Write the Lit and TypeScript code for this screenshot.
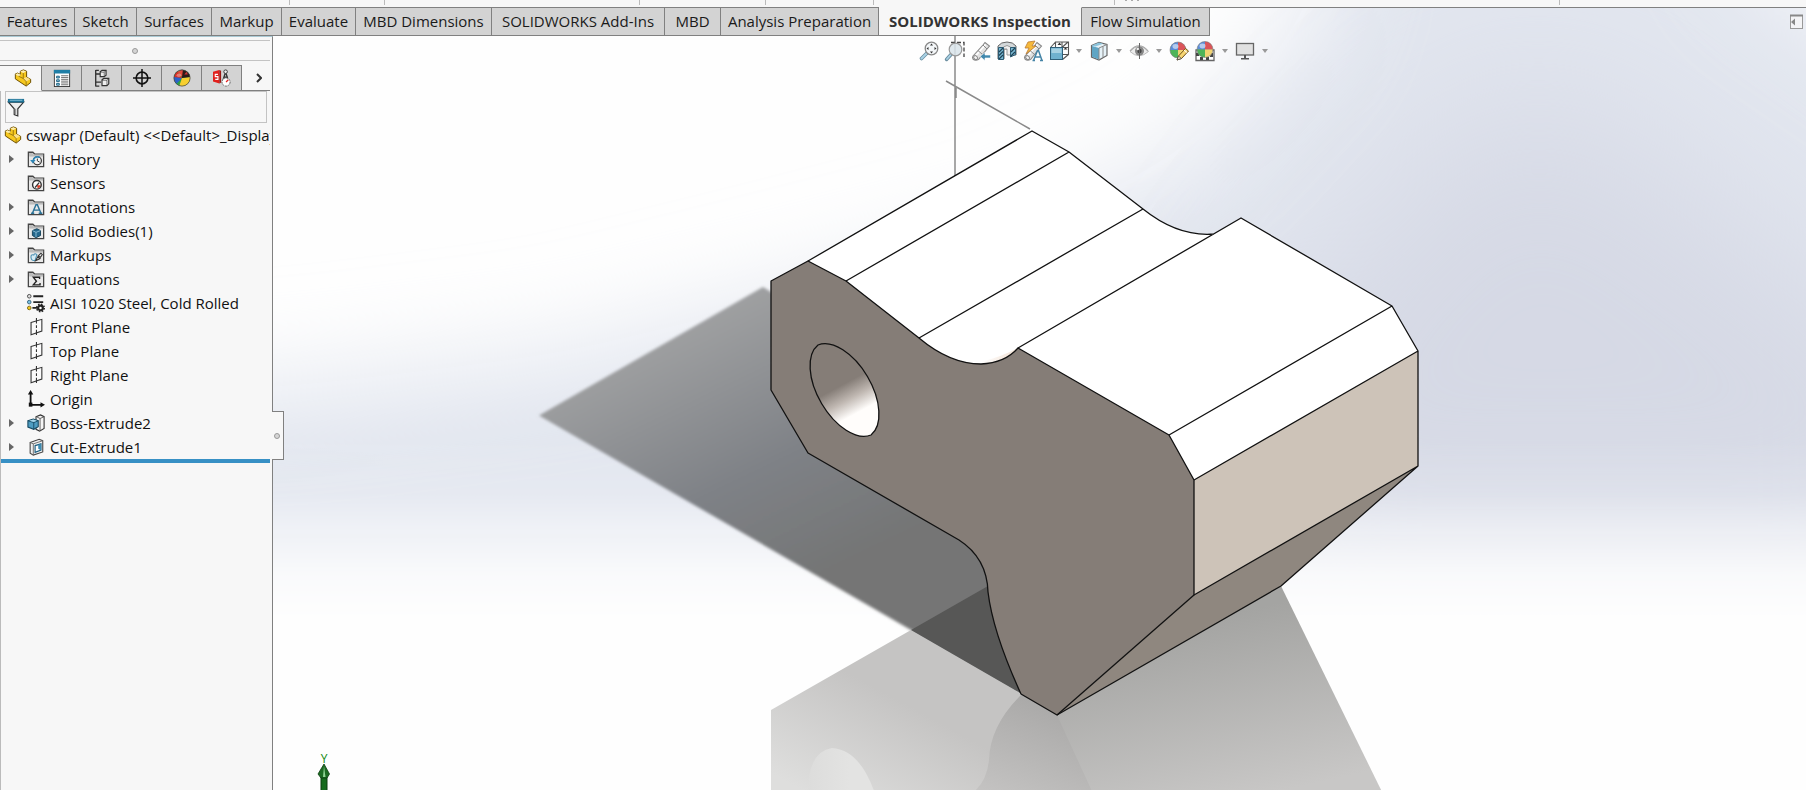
import { LitElement, html, css, svg, nothing } from "lit";
import { customElement, property } from "lit/decorators.js";
import { classMap } from "lit/directives/class-map.js";

const TABS = [
  "Features", "Sketch", "Surfaces", "Markup", "Evaluate", "MBD Dimensions",
  "SOLIDWORKS Add-Ins", "MBD", "Analysis Preparation", "SOLIDWORKS Inspection", "Flow Simulation",
];
const ACTIVE_TAB = "SOLIDWORKS Inspection";

interface TreeNode { label: string; icon: string; expandable?: boolean; }
const TREE: TreeNode[] = [
  { label: "History", icon: "history", expandable: true },
  { label: "Sensors", icon: "sensors" },
  { label: "Annotations", icon: "annotations", expandable: true },
  { label: "Solid Bodies(1)", icon: "bodies", expandable: true },
  { label: "Markups", icon: "markups", expandable: true },
  { label: "Equations", icon: "equations", expandable: true },
  { label: "AISI 1020 Steel, Cold Rolled", icon: "material" },
  { label: "Front Plane", icon: "plane" },
  { label: "Top Plane", icon: "plane" },
  { label: "Right Plane", icon: "plane" },
  { label: "Origin", icon: "origin" },
  { label: "Boss-Extrude2", icon: "boss", expandable: true },
  { label: "Cut-Extrude1", icon: "cut", expandable: true },
];

const folder = svg`
  <path d="M1.5 18.5V2.5H6.5L8.5 4.5H18.5V18.5Z" fill="#e9e9e9" stroke="#444" stroke-width="1.4"/>
  <path d="M2.5 6.5H18" stroke="#999"/><path d="M2.3 3.3H6L7.6 5H18v1H2.3z" fill="#bdbdbd"/>`;

const ball = svg`
  <path d="M9 9V1A8 8 0 0 0 1 9Z" fill="#5a8cd8"/>
  <path d="M9 9V1A8 8 0 0 1 17 9Z" fill="#db5459"/>
  <path d="M9 9V17A8 8 0 0 1 1 9Z" fill="#4fb458"/>
  <path d="M9 9V17A8 8 0 0 0 17 9Z" fill="#f1d372"/>
  <circle cx="9" cy="9" r="8" fill="none" stroke="#777" stroke-width=".6"/>
  <ellipse cx="6.500" cy="5.500" rx="3" ry="2.400" fill="#fff" opacity=".55"/>`;

const tube = svg`
  <path d="M2 15L12 4L14 1.500L18.500 5L16 8L7.500 18.500Q4 20 2 18Q1 16.500 2 15Z" fill="#e2e2e2" stroke="#888" stroke-width="1.100"/>
  <path d="M4 15.500L14.500 3.500" stroke="#fff" stroke-width="1.600"/>
  <path d="M12 4L16 8M7 9.500L11.500 13.500" stroke="#888"/>
  <ellipse cx="4.600" cy="16.600" rx="2.200" ry="1.600" fill="#f5f5f5" stroke="#888" transform="rotate(45 4.600 16.600)"/>`;

const ICONS: Record<string, unknown> = {
  part: svg`
    <path d="M1.500 5.500L4 4.500L7 6V2.500L10.500 1L14 2.500V9L18.500 11.500V15L13.500 19L1.500 11Z" fill="#f6c81e" stroke="#6d4f00" stroke-width="1.100" stroke-linejoin="round"/>
    <path d="M7 2.800L10.500 1.500L13.500 2.800L10.300 4.500Z" fill="#fdeeb0"/>
    <path d="M1.500 5.800L4 4.800L7.500 6.500L5 8Z" fill="#fdeeb0"/>
    <path d="M10.300 10.500L13.800 9L18 11.500L13.500 14Z" fill="#fbe08a"/>
    <path d="M10.300 4.500V10.500L13.500 14V18.500M10.300 10.500L5 8" fill="none" stroke="#6d4f00" stroke-width=".7"/>`,
  properties: svg`
    <rect x="1.500" y="1.500" width="17" height="18" fill="#fff" stroke="#333"/>
    <rect x="1" y="1" width="18" height="4" fill="#1f7ea6"/>
    <path d="M4 8H7V10H4zM4 12H7V14H4zM4 16H7V18H4z" fill="#9cc9de" stroke="#135d80"/>
    <path d="M9 7.500h8M9 9.500h8M9 11.500h8M9 13.500h8M9 15.500h8M9 17.500h8" stroke="#222" stroke-width=".7"/>`,
  config: svg`
    <path d="M3 1V19.500M3 5.500H8M3 14.500H9M6.500 1.500H3M7 19H3" fill="none" stroke="#333" stroke-width="1.500"/>
    <path d="M8 3L10 1.500H14.500V7L12.500 8.500H8ZM10 12L12 10.500H17.500V16.500L15.500 18.500H10Z" fill="#eee" stroke="#333" stroke-width="1.300"/>
    <path d="M8 3.500H12.500V8.500M12.500 3.500L14.500 1.500M10 12.500H15.500V18.500M15.500 12.500L17.500 10.500" fill="none" stroke="#333" stroke-width=".7"/>`,
  dimxpert: svg`
    <circle cx="10" cy="10" r="6.500" fill="none" stroke="#111" stroke-width="1.800"/>
    <path d="M10 0V20M0 10H20" stroke="#111" stroke-width="1.700"/>`,
  display: svg`
    <circle cx="10" cy="10" r="9" fill="#3fae49"/>
    <path d="M10 10L5 2.500A9 9 0 0 0 2 14Z" fill="#d93025"/>
    <path d="M10 10L2 14A9 9 0 0 0 10 19Z" fill="#2d9f46"/>
    <path d="M10 10L1 9A9 9 0 0 0 4 16.500Z" fill="#2b62c9"/>
    <path d="M10 10L19 9A9 9 0 0 1 7 18.500Z" fill="#f7cf2f"/>
    <path d="M10 10L8 1.200A9 9 0 0 1 19 9Z" fill="#2a1a1a"/>
    <path d="M10 9L5 3Q8 .600 11 1.200Z" fill="#e24a3b"/>
    <path d="M12.500 6L16.500 6L15 3Z" fill="#c33"/>
    <circle cx="10" cy="10" r="9" fill="none" stroke="#444" stroke-width=".8"/>
    <ellipse cx="6.500" cy="7" rx="2.500" ry="2" fill="#fff" opacity=".35"/>`,
  inspection: svg`
    <path d="M0 3L7 1V16L0 14Z" fill="#e2201d"/><path d="M7 1L9 2V15L7 16Z" fill="#9c1512"/>
    <path d="M5.500 6H2.500V8.500H5.500V11.500H2.500" fill="none" stroke="#fff" stroke-width="1.200"/>
    <circle cx="14" cy="3" r="2" fill="#eee" stroke="#333"/>
    <path d="M13.500 5L10.500 14M14.500 5L17.500 14M11.500 9H16.500" stroke="#333" stroke-width="1.500"/>
    <circle cx="14.500" cy="14.500" r="4.500" fill="#fff" stroke="#555" stroke-dasharray="2 1"/>
    <path d="M14.500 14.500L17 12" stroke="#e2201d" stroke-width="1.400"/>`,
  funnel: svg`
    <path d="M1.500 4.500L8 12V18.500L12 20V12L18.500 4.500Z" fill="#eee" stroke="#333" stroke-width="1.300"/>
    <path d="M9.500 12V18" stroke="#999" stroke-width="1.500"/>
    <path d="M1 1H19V5H1Z" fill="#1e7396"/><path d="M3 2.500H17" stroke="#8fc6dc"/>`,
  history: svg`${folder}
    <circle cx="11.500" cy="12" r="4.500" fill="#f4f4f4" stroke="#333" stroke-width="1.300"/>
    <path d="M7 12A4.500 4.500 0 0 1 14 8.300" fill="none" stroke="#2b84b5" stroke-width="1.800"/>
    <path d="M11.500 9.500V12L14 13.500" fill="none" stroke="#333" stroke-width="1.100"/>
    <path d="M3.500 11H9.500L6.500 15Z" fill="#2b84b5"/>`,
  sensors: svg`${folder}
    <circle cx="11" cy="12" r="4.800" fill="#fff" stroke="#333" stroke-width="1.600"/>
    <path d="M11 12.500L15 12.500A4 4 0 0 1 12 16Z" fill="#e2361d"/><path d="M9 15L13.500 9.500" stroke="#333" stroke-width="1.400"/>`,
  annotations: svg`${folder}
    <path d="M6 17L10 7.500H11.500L15.500 17M7.500 13.500H13.500M4.500 17H8M13 17H17" fill="none" stroke="#2a7297" stroke-width="1.600"/>`,
  bodies: svg`${folder}
    <path d="M6 9.500L11 7.500L15 9.500V15L10 17.500L6 15Z" fill="#24678c" stroke="#123f57"/>
    <path d="M6 9.500L10 11.500L15 9.500M10 11.500V17" fill="none" stroke="#8fc0d8"/>`,
  markups: svg`${folder}
    <path d="M4.500 13Q4 9 7.500 10Q8.500 7.500 11 9.500L9 16Q5 17 4.500 13Z" fill="#d6ebf4" stroke="#4a90b3" stroke-width="1.200"/>
    <path d="M9.500 16.500L12 12L14.500 14ZM12.500 11L15.500 8L17 9.500L15 12.500Z" fill="#eee" stroke="#333" stroke-width="1.200"/>`,
  equations: svg`${folder}
    <path d="M14 10V8H7L10.500 12.500L7 16.500H14.500V14.500" fill="none" stroke="#222" stroke-width="1.500"/>`,
  material: svg`
    <path d="M7 2.500H18M7 9H18M6 15.500H12" stroke="#222" stroke-width="2"/>
    <circle cx="2.500" cy="2.500" r="2" fill="#ddd" stroke="#444"/>
    <circle cx="2.500" cy="9" r="2" fill="#7cc2e4" stroke="#33617a"/>
    <circle cx="2.500" cy="15.500" r="2" fill="#f3c81c" stroke="#7a6410"/>
    <circle cx="15" cy="15.500" r="2.600" fill="#fff" stroke="#222" stroke-width="2.400"/>
    <circle cx="15" cy="15.500" r="4.200" fill="none" stroke="#222" stroke-width="1.600" stroke-dasharray="1.700 1.600"/>`,
  plane: svg`
    <path d="M4.500 5L16.500 1.500V14.500L4.500 18.500Z" fill="#fbfbfb" stroke="#333" stroke-width="1.200"/>
    <path d="M10.500 0V20" stroke="#333" stroke-width="1.200" stroke-dasharray="6 2 3 2"/>`,
  origin: svg`
    <path d="M4 17V4M4 16.500H16" stroke="#111" stroke-width="2" fill="none"/>
    <path d="M4 0L7 5H1ZM20 16.500L15 13.500V19.500Z" fill="#111"/><path d="M2 14H6V18.500H2Z" fill="#111"/>`,
  boss: svg`
    <path d="M10 3L15 1L19 3V16L14 19L10 17Z" fill="#f5f5f5" stroke="#333" stroke-width="1.200"/>
    <path d="M14.500 5V18M14.500 5L19 3M10.500 3L14.500 5" stroke="#555" fill="none"/>
    <path d="M1 7.500L7 5.500L12.500 7.500V14L7.500 17L1 14.500Z" fill="#4d9cc1" stroke="#164a63" stroke-width="1.200"/>
    <path d="M1 7.500L7.500 9.500L12.500 7.500M7.500 9.500V17" fill="none" stroke="#164a63"/>
    <path d="M2.500 7.500L7 6L11 7.500L7.500 8.800Z" fill="#a9d5e8"/>`,
  cut: svg`
    <path d="M3.500 5L13.500 1.500L17.500 3V15.500L7 19L3.500 17Z" fill="#f1f1f1" stroke="#444" stroke-width="1.200"/>
    <path d="M3.500 5L7 6.500L17.500 3M7 6.500V19" fill="none" stroke="#666"/>
    <path d="M9 8.500L15.500 6.500V13.500L9 16Z" fill="#fff" stroke="#1d5e80" stroke-width="1.300"/>
    <path d="M12.500 7.500L15.500 6.500V13.500L12.500 12Z" fill="#3a8cb4"/>`,
  zoomFit: svg`
    <path d="M2.500 17.500L8 12" stroke="#6b8ea0" stroke-width="3.600" stroke-linecap="round"/>
    <path d="M2.500 17.500L7.500 12.500" stroke="#a9d2e6" stroke-width="2" stroke-linecap="round"/>
    <circle cx="12.500" cy="7.500" r="6.300" fill="#f3f6f8" stroke="#888" stroke-width="1.300"/>
    <path d="M12.500 2.500L14 4.500H11ZM12.500 12.500L14 10.500H11ZM7.500 7.500L9.500 6V9ZM17.500 7.500L15.500 6V9Z" fill="#333"/>`,
  zoomArea: svg`
    <path d="M6 1.500H19V16" fill="none" stroke="#444" stroke-width="1.300" stroke-dasharray="4 2"/>
    <path d="M1.500 18.500L6 13.500" stroke="#6b8ea0" stroke-width="3.400" stroke-linecap="round"/>
    <path d="M2 18L5.500 14" stroke="#a9d2e6" stroke-width="1.800" stroke-linecap="round"/>
    <circle cx="10.500" cy="8.500" r="6.300" fill="#d9e4ea" fill-opacity=".85" stroke="#999" stroke-width="1.200"/>`,
  previous: svg`${tube}<path d="M9 15.500L14 11.500V14H19.500V17H14V19.500Z" fill="#4189ae" stroke="#fff" stroke-width=".6"/>`,
  section: svg`
    <path d="M1 5Q4 1 10 1T19 5V14H14V8H7V18H1Z" fill="#d3d8da" stroke="#666"/>
    <path d="M6.500 6Q10 3 13.500 6V14H10V8H6.500Z" fill="#f0f0f0" stroke="#999"/>
    <path d="M1.500 6.500H6.500V18.500H1.500ZM13.500 6.500H18.500V13.500L13.500 16Z" fill="#7ab8d3" stroke="#2e5c74"/>
    <path d="M2 11L6 7M2 14.500L6 10.500M2 18L6 14M14 11L18 7M14 15L18 11" stroke="#1f4355" stroke-width="1.200"/>`,
  dynamic: svg`${tube}<path d="M5 1L12 0L9 5H13L3 13L6 7H2Z" fill="#f6b93b" stroke="#b97a35" stroke-width=".8"/>
    <path d="M10.500 19.500L14.500 9.500H15.500L19 19.500M12 16H17.500M9.500 19.500H12M17 19.500H20" fill="none" stroke="#4584a6" stroke-width="1.500"/>`,
  orientation: svg`
    <path d="M6.500 6.500V1H19.500V13.500H13.500M1.500 6.500L6.500 1M13 6.500L19 1M13.500 18.500L19.500 13.500M13 1V6M14 6.500H19" fill="none" stroke="#555" stroke-width="1.100"/>
    <rect x="1.500" y="6.500" width="12" height="12" fill="#6fb1cf" stroke="#2f607a"/>
    <path d="M2.500 7.500H12.500V12H2.500z" fill="#a6d1e3"/>
    <path d="M16.500 6.500L14.500 8.500H18.500ZM10.500 1.500L8.500 4H12.500Z" fill="#333"/>`,
  style: svg`
    <path d="M2.500 4.500L10 1.500L18 3.500V14.500L10 19L2.500 16Z" fill="#e6f2f8" stroke="#666" stroke-width="1.200"/>
    <path d="M3 5L10 7V18.500L3 15.800Z" fill="#5fa5c4"/><path d="M6.500 5.500L14 2.800L10 1.500L2.500 4.500Z" fill="#8dc5dd"/>
    <path d="M10 7L18 3.500M10 7V19M14 5.500V16.500" fill="none" stroke="#888"/>`,
  eye: svg`
    <path d="M1 10.500Q10 0 19.500 10.500Q10 19 1 10.500Z" fill="#ececec" stroke="#bbb"/>
    <path d="M1 10Q10 -.500 19 10" fill="none" stroke="#aaa" stroke-width="1.200"/>
    <circle cx="10.500" cy="10" r="4.500" fill="#888"/><circle cx="10.500" cy="10" r="2.200" fill="#444"/>
    <path d="M10.500 2V18" stroke="#666"/><circle cx="8.800" cy="8" r="1.200" fill="#eee"/>`,
  appearance: svg`${ball}<path d="M8 19L9.500 15L16.500 7.500L19.500 10L12.500 17.500Z" fill="#f6d573" stroke="#6d4f16"/>
    <path d="M8 19L9.500 15L12.500 17.500Z" fill="#f2dcc0" stroke="#444" stroke-width=".7"/><path d="M15 9L18 11.500" stroke="#fff"/>`,
  scene: svg`
    <path d="M1 9H19V19.500H1Z" fill="#fff" stroke="#666" stroke-width="1.300"/>
    <path d="M1 12H4V15H1zM5 16H8V19H5zM11 16H14V19H11zM15 12H18V16H15z" fill="#444"/>
    <g transform="translate(1 -.500)">${ball}</g>`,
  monitor: svg`
    <rect x="1.500" y="2.500" width="17" height="11.500" fill="#e1e1e1" stroke="#666" stroke-width="1.300"/>
    <path d="M9 14H11V17H14V18.500H6V17H9Z" fill="#555"/>`,
  collapse: svg`
    <rect x="4.500" y="3.500" width="12" height="13" fill="#f4f4f6" stroke="#999"/>
    <path d="M4 3.500H17" stroke="#888" stroke-width="2"/><path d="M9 6.500V13.500L5 10Z" fill="#888"/>`,
};

@customElement("cad-icon")
class CadIcon extends LitElement {
  @property() name = "";
  static styles = css`
    :host { display: block; flex: none; width: 20px; height: 20px; }
    svg { display: block; width: 100%; height: 100%; overflow: visible; }
  `;
  render() {
    return html`<svg viewBox="0 0 20 20" aria-hidden="true">${ICONS[this.name] ?? nothing}</svg>`;
  }
}

@customElement("cad-scene")
class CadScene extends LitElement {
  static styles = css`
    :host { display: block; }
    svg { display: block; width: 100%; height: 100%; }
    .edge { fill: none; stroke: #111; stroke-width: 1.300; stroke-linejoin: round; }
    .sketch { fill: none; stroke: #8a8a8a; stroke-width: 1.500; }
    .axis { font: 12px "Open Sans", sans-serif; fill: #128a12; }
  `;
  render() {
    return html`
      <svg viewBox="0 8 1806 782" preserveAspectRatio="xMidYMid slice" role="img" aria-label="Part model">
        <defs>
          <filter id="soft" filterUnits="userSpaceOnUse" x="-400" y="-400" width="2600" height="1500"><feGaussianBlur stdDeviation="50"/></filter>
          <filter id="wide" filterUnits="userSpaceOnUse" x="800" y="-300" width="1400" height="1200"><feGaussianBlur stdDeviation="80"/></filter>
          <filter id="rim" x="-5%" y="-5%" width="110%" height="110%"><feGaussianBlur stdDeviation="1.500"/></filter>
          <linearGradient id="fade" gradientUnits="userSpaceOnUse" x1="0" y1="440" x2="0" y2="620">
            <stop offset="0" stop-color="#fff"/><stop offset=".3" stop-color="#ddd"/>
            <stop offset=".5" stop-color="#888"/><stop offset=".75" stop-color="#282828"/><stop offset="1" stop-color="#000"/>
          </linearGradient>
          <mask id="horizon" maskUnits="userSpaceOnUse" x="-200" y="-200" width="2300" height="1100">
            <rect x="-200" y="-200" width="2300" height="1100" fill="url(#fade)"/>
          </mask>
          <linearGradient id="shade" gradientUnits="userSpaceOnUse" x1="720" y1="290" x2="850" y2="560">
            <stop offset="0" stop-color="#a2a3a4"/><stop offset=".6" stop-color="#7e8186"/><stop offset="1" stop-color="#747575"/>
          </linearGradient>
          <linearGradient id="mirrorLeft" gradientUnits="userSpaceOnUse" x1="880" y1="690" x2="820" y2="800">
            <stop offset="0" stop-color="#c5c4c3"/><stop offset="1" stop-color="#dededd"/>
          </linearGradient>
          <linearGradient id="mirrorRight" gradientUnits="userSpaceOnUse" x1="1200" y1="620" x2="1240" y2="800">
            <stop offset="0" stop-color="#a4a4a2"/><stop offset="1" stop-color="#c8c7c6"/>
          </linearGradient>
          <linearGradient id="mirrorMid" gradientUnits="userSpaceOnUse" x1="1040" y1="700" x2="1000" y2="800">
            <stop offset="0" stop-color="#aaa9a8"/><stop offset="1" stop-color="#c4c3c2"/>
          </linearGradient>
          <linearGradient id="bore" gradientUnits="userSpaceOnUse" x1="840" y1="386" x2="855" y2="414">
            <stop offset="0" stop-color="#857d77"/><stop offset=".5" stop-color="#c0b8b2"/><stop offset="1" stop-color="#fffdfb"/>
          </linearGradient>
          <linearGradient id="boreMirror" gradientUnits="userSpaceOnUse" x1="806" y1="0" x2="850" y2="0">
            <stop offset="0" stop-color="#dcdcdb"/><stop offset="1" stop-color="#e3e3e2"/>
          </linearGradient>
          <linearGradient id="valley" gradientUnits="userSpaceOnUse" x1="985" y1="352" x2="1010" y2="362">
            <stop offset="0" stop-color="#fff"/><stop offset="1" stop-color="#f3e4d8"/>
          </linearGradient>
        </defs>

        <rect x="-200" y="-200" width="2300" height="1200" fill="#fefefe"/>
        <g mask="url(#horizon)">
          <path d="M-200 410L300 386L560 354L800 295L1010 240L1190 150L1310 20L1350 -200L1700 -200L1760 -40L1950 90V800H-200Z" fill="#e2e6ef" filter="url(#soft)"/>
          <path d="M1230 400Q1400 120 1550 80Q1760 230 1950 380V540H1230Z" fill="#d6d9e5" filter="url(#wide)"/>
        </g>

        <path d="M539 415.500L763 287L800 310L1040 560L1022 694Z" fill="url(#shade)" filter="url(#rim)"/>
        <path d="M771 710L911 630L1022 694L1000 800H771Z" fill="url(#mirrorLeft)"/>
        <path d="M911 630L988 586L1022 694Z" fill="#575756"/>
        <path d="M808 800Q806 752 832 748Q862 750 877 800Z" fill="url(#boreMirror)"/>
        <path d="M1022 694Q990 725 989 760Q986 790 960 800H1100L1060 712Z" fill="url(#mirrorMid)"/>
        <path d="M1057 715L1281 586L1386 800H1096Z" fill="url(#mirrorRight)"/>

        <path class="sketch" d="M955 36V176M946 81L1030 129M956 88V98"/>

        <path d="M808 261L1032 131L1069 152L1143 209Q1178 237 1214 234L1241 218L1392 306L1418 351L1194 480L1018 400L840 340Z" fill="#fff"/>
        <path d="M981 364Q1005 363 1018 348Q1003 356 981 362Z" fill="url(#valley)"/>
        <path d="M1194 480L1418 351V466L1194 595Z" fill="#cdc3b8"/>
        <path d="M1194 595L1418 466L1281 586L1057 715Z" fill="#8f877f"/>
        <path d="M771 281L808 261L846 281L919 338Q950 364 981 364Q1005 363 1018 348L1169 435L1194 480V595L1057 715L1021 694Q993 633 988 592Q987 558 959 540L808 453L771 390Z" fill="#857d77"/>
        <path class="edge" style="fill:url(#bore)" d="M818 345A52.400 29 59.500 0 1 871 435A52.400 29 59.500 0 1 818 345Z"/>

        <path class="edge" d="M771 281L808 261L846 281L919 338Q950 364 981 364Q1005 363 1018 348L1169 435L1194 480V595L1057 715L1021 694Q993 633 988 592Q987 558 959 540L808 453L771 390Z"/>
        <path class="edge" d="M808 261L1032 131L1069 152L1143 209Q1178 237 1214 234M846 281L1069 152M919 338L1143 209M1018 348L1241 218L1392 306L1418 351V466L1281 586L1057 715M1169 435L1392 306M1194 480L1418 351M1194 595L1418 466"/>

        <text class="axis" x="324" y="763" text-anchor="middle">Y</text>
        <path d="M321 777H327V800H321Z" fill="#156a1c" stroke="#0b3d0f"/>
        <path d="M324 764L329.500 774L327 778H321L318 774Z" fill="#1c6b22" stroke="#0b3d0f" stroke-width=".8"/>
        <path d="M324 766L325.500 777H323Z" fill="#8fd394"/>
      </svg>`;
  }
}

@customElement("feature-panel")
class FeaturePanel extends LitElement {
  static styles = css`
    :host {
      display: flex; flex-direction: column; position: relative; box-sizing: border-box;
      width: 273px; flex: none; background: #f7f7f7; border-right: 1px solid #808080;
      border-top: 1px solid #a9c9d4; color: #111;
      font: 15px/24px "Open Sans", "Segoe UI", sans-serif;
    }
    button { font: inherit; color: inherit; background: none; border: 0; padding: 0; margin: 0; }
    .grip { height: 19px; margin: 3px 2px 4px 0; border: solid #c3c3c3; border-width: 1px 0; display: grid; place-items: center; }
    .dot { width: 4px; height: 4px; border: 1px solid #999; border-radius: 50%; background: #d5d5d5; }
    .body { display: flex; flex-direction: column; flex: 1; border-left: 1px solid #bbb; margin-right: 2px; min-width: 0; }
    .tabs { display: flex; height: 26px; border-bottom: 1px solid #808080; margin-right: 2px; box-sizing: border-box; }
    .tab { width: 40px; height: 26px; box-sizing: border-box; display: grid; place-items: center; background: #d3d3d3; border: 1px solid #808080; border-left: 0; }
    .tab cad-icon { width: 18px; height: 18px; }
    .tab.on { width: 42px; background: #f7f7f7; border-bottom-color: #f7f7f7; padding-left: 4px; }
    .more { flex: 1; display: grid; place-items: center; }
    .more svg { width: 6px; height: 10px; margin-left: 6px; fill: none; stroke: #333; stroke-width: 2; }
    .filter { display: flex; align-items: center; height: 32px; box-sizing: border-box; margin: 0 3px 0 4px; border: 1px solid #c3c3c3; }
    .filter cad-icon { width: 18px; height: 18px; margin-left: 1px; }
    .filter input { flex: 1; min-width: 0; border: 0; outline: 0; background: none; font: inherit; }
    ul { list-style: none; margin: 0; padding: 0; }
    .row { display: flex; align-items: center; height: 24px; white-space: nowrap; }
    .row cad-icon { width: 18px; height: 18px; margin-right: 5px; }
    .root { padding-left: 3px; overflow: hidden; }
    .root cad-icon { margin-right: 4px; }
    .twisty { width: 26px; height: 24px; display: flex; align-items: center; flex: none; }
    .twisty svg { width: 5px; height: 8px; margin-left: 8px; fill: #666; display: block; }
    .rollback { height: 4px; background: #3790c5; }
    .handle {
      position: absolute; left: 272px; top: 374px; width: 12px; height: 49px; box-sizing: border-box;
      background: #f7f7f7; border: 1px solid #808080; border-left: 0; display: flex; align-items: center;
    }
    .handle .dot { margin-left: 2px; }
  `;
  render() {
    const tabs = [
      ["part", "FeatureManager"], ["properties", "PropertyManager"], ["config", "ConfigurationManager"],
      ["dimxpert", "DimXpertManager"], ["display", "DisplayManager"], ["inspection", "Inspection"],
    ];
    return html`
      <div class="grip"><span class="dot"></span></div>
      <div class="tabs">
        ${tabs.map(([icon, name], i) => html`
          <button class=${classMap({ tab: true, on: i === 0 })} aria-label=${name}><cad-icon name=${icon}></cad-icon></button>`)}
        <button class="more" aria-label="More tabs"><svg viewBox="0 0 6 10"><path d="M1 1L5 5L1 9"/></svg></button>
      </div>
      <div class="body">
        <label class="filter"><cad-icon name="funnel"></cad-icon><input type="text" aria-label="Filter"></label>
        <div class="row root"><cad-icon name="part"></cad-icon><span>cswapr (Default) &lt;&lt;Default&gt;_Display</span></div>
        <ul>
          ${TREE.map((n) => html`
            <li class="row">
              ${n.expandable
                ? html`<button class="twisty" aria-label="Expand ${n.label}"><svg viewBox="0 0 5 8"><path d="M0 0L5 4L0 8Z"/></svg></button>`
                : html`<span class="twisty"></span>`}
              <cad-icon name=${n.icon}></cad-icon><span>${n.label}</span>
            </li>`)}
        </ul>
        <div class="rollback"></div>
      </div>
      <button class="handle" aria-label="Collapse panel"><span class="dot"></span></button>`;
  }
}

@customElement("app-root")
class AppRoot extends LitElement {
  static styles = css`
    :host { display: flex; flex-direction: column; height: 100vh; overflow: hidden; font: 15px/20px "Open Sans", "Segoe UI", sans-serif; color: #1a1a1a; }
    button { font: inherit; color: inherit; background: none; border: 0; padding: 0; margin: 0; }
    .strip { display: grid; grid-template-columns: 290px 95px 255px 126px 108px 241px 445px 1fr; height: 7px; flex: none; background: #f7f7f7; }
    .strip span { height: 5px; border-right: 1px solid #bbb; }
    .strip span:last-child { border: 0; }
    .strip .dots { display: flex; gap: 4px; padding-left: 10px; box-sizing: border-box; }
    .dots i { width: 2px; height: 1px; background: #aaa; }
    .work { position: relative; flex: 1; min-height: 0; display: flex; flex-direction: column; }
    cad-scene { position: absolute; inset: 1px 0 0; }
    .tabs { position: relative; display: flex; height: 29px; flex: none; box-sizing: border-box; }
    .set { display: grid; grid-template-columns: 75px 62px 75px 70px 74px 136px 173px 56px 158px 203px 128px; }
    .tab { box-sizing: border-box; height: 29px; padding-bottom: 2px; background: #d3d3d3; border: 1px solid #808080; border-left: 0; white-space: nowrap; text-align: center; }
    .tab.on { background: #f7f7f7; border-top-color: #f7f7f7; font-weight: 700; color: #333; }
    .rest { flex: 1; border-top: 1px solid #808080; display: flex; justify-content: flex-end; align-items: center; }
    .collapse { display: block; }
    .main { position: relative; display: flex; flex: 1; min-height: 0; }
    .view { flex: 1; min-width: 0; display: flex; align-items: flex-start; padding: 5px 0 0 646px; }
    .heads { display: flex; align-items: center; gap: 6px; }
    .caret { width: 8px; height: 20px; display: grid; place-items: center; }
    .caret svg { width: 6px; height: 4px; fill: #999; }
  `;
  render() {
    const tools: [string, string, boolean][] = [
      ["zoomFit", "Zoom to Fit", false], ["zoomArea", "Zoom to Area", false], ["previous", "Previous View", false],
      ["section", "Section View", false], ["dynamic", "Dynamic Annotation Views", false],
      ["orientation", "View Orientation", true], ["style", "Display Style", true], ["eye", "Hide/Show Items", true],
      ["appearance", "Edit Appearance", false], ["scene", "Apply Scene", true], ["monitor", "View Settings", true],
    ];
    return html`
      <div class="strip">
        <span></span><span></span><span></span><span></span><span></span><span></span>
        <span class="dots"><i></i><i></i><i></i></span><span></span>
      </div>
      <div class="work">
        <cad-scene></cad-scene>
        <nav class="tabs">
          <div class="set">
            ${TABS.map((t) => html`<button class=${classMap({ tab: true, on: t === ACTIVE_TAB })}>${t}</button>`)}
          </div>
          <div class="rest"><button class="collapse" aria-label="Show task pane"><cad-icon name="collapse"></cad-icon></button></div>
        </nav>
        <div class="main">
          <feature-panel></feature-panel>
          <div class="view">
            <div class="heads">
              ${tools.map(([icon, name, menu]) => html`
                <button aria-label=${name}><cad-icon name=${icon}></cad-icon></button>
                ${menu ? html`<button class="caret" aria-label="${name} options"><svg viewBox="0 0 6 4"><path d="M0 0H6L3 4Z"/></svg></button>` : nothing}`)}
            </div>
          </div>
        </div>
      </div>`;
  }
}
